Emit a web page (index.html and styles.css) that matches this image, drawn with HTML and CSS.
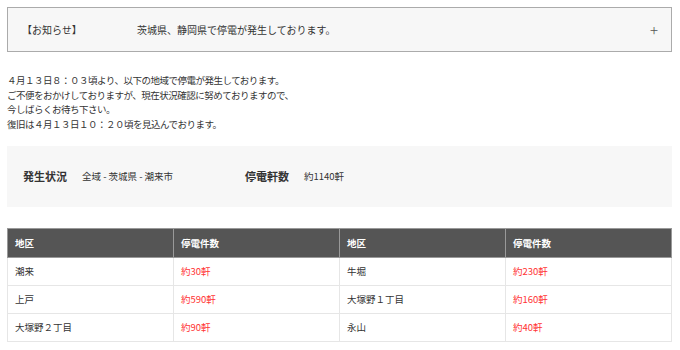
FILE: index.html
```html
<!DOCTYPE html>
<html lang="ja">
<head>
    <meta charset="UTF-8">
    <meta name="viewport" content="width=device-width, initial-scale=1.0">
    <title>停電情報</title>
    <link rel="stylesheet" href="styles.css">
</head>
<body>

<div class="container">
    <div class="notice">
        <span class="notice-label">【お知らせ】</span>
        <span class="notice-title">茨城県、静岡県で停電が発生しております。</span>
        <span class="notice-toggle">+</span>
    </div>

    <p class="message">
        ４月１３日８：０３頃より、以下の地域で停電が発生しております。<br>
        ご不便をおかけしておりますが、現在状況確認に努めておりますので、<br>
        今しばらくお待ち下さい。<br>
        復旧は４月１３日１０：２０頃を見込んでおります。
    </p>

    <div class="status">
        <div class="status-item">
            <span class="status-label">発生状況</span>
            <span class="status-value">全域 - 茨城県 - 潮来市</span>
        </div>
        <div class="status-item">
            <span class="status-label">停電軒数</span>
            <span class="status-value">約1140軒</span>
        </div>
    </div>

    <table class="outage-table">
        <thead>
            <tr>
                <th>地区</th>
                <th>停電件数</th>
                <th>地区</th>
                <th>停電件数</th>
            </tr>
        </thead>
        <tbody>
            <tr>
                <td>潮来</td>
                <td class="count">約30軒</td>
                <td>牛堀</td>
                <td class="count">約230軒</td>
            </tr>
            <tr>
                <td>上戸</td>
                <td class="count">約590軒</td>
                <td>大塚野１丁目</td>
                <td class="count">約160軒</td>
            </tr>
            <tr>
                <td>大塚野２丁目</td>
                <td class="count">約90軒</td>
                <td>永山</td>
                <td class="count">約40軒</td>
            </tr>
        </tbody>
    </table>
</div>

</body>
</html>
```

FILE: styles.css
```css
body {
    font-family: "Noto Sans CJK JP", "Liberation Sans", sans-serif;
    color: #333;
    background-color: #fff;
    margin: 0;
    padding: 7px 8px 0 7px;
}
.container {
    width: 665px;
}
.notice {
    display: flex;
    align-items: center;
    height: 43px;
    padding: 0 14px;
    border: 1px solid #ababab;
    background-color: #f7f7f7;
    font-size: 10px;
}
.notice-label {
    width: 115px;
}
.notice-title {
    flex: 1;
}
.notice-toggle {
    font-size: 15px;
    color: #555;
    font-weight: 300;
    margin-right: -1px;
}
.message {
    margin: 21px 0 14px;
    font-size: 9.5px;
    line-height: 14.7px;
    letter-spacing: -0.5px;
}
.status {
    display: flex;
    align-items: center;
    height: 61px;
    padding: 0 16px;
    background-color: #f7f7f7;
}
.status-item {
    display: flex;
    align-items: center;
    width: 222px;
}
.status-label {
    font-size: 11px;
    font-weight: bold;
    margin-right: 15px;
}
.status-value {
    font-size: 9.5px;
}
.outage-table {
    width: 100%;
    margin-top: 21px;
    border-collapse: collapse;
    table-layout: fixed;
    font-size: 9.5px;
}
.outage-table th {
    height: 28px;
    padding: 0 7px;
    text-align: left;
    color: #fff;
    background-color: #555;
    border: 1px solid #999;
}
.outage-table td {
    height: 27px;
    padding: 0 7px;
    border: 1px solid #e6e6e6;
}
.outage-table td.count {
    color: #f33;
}
```
